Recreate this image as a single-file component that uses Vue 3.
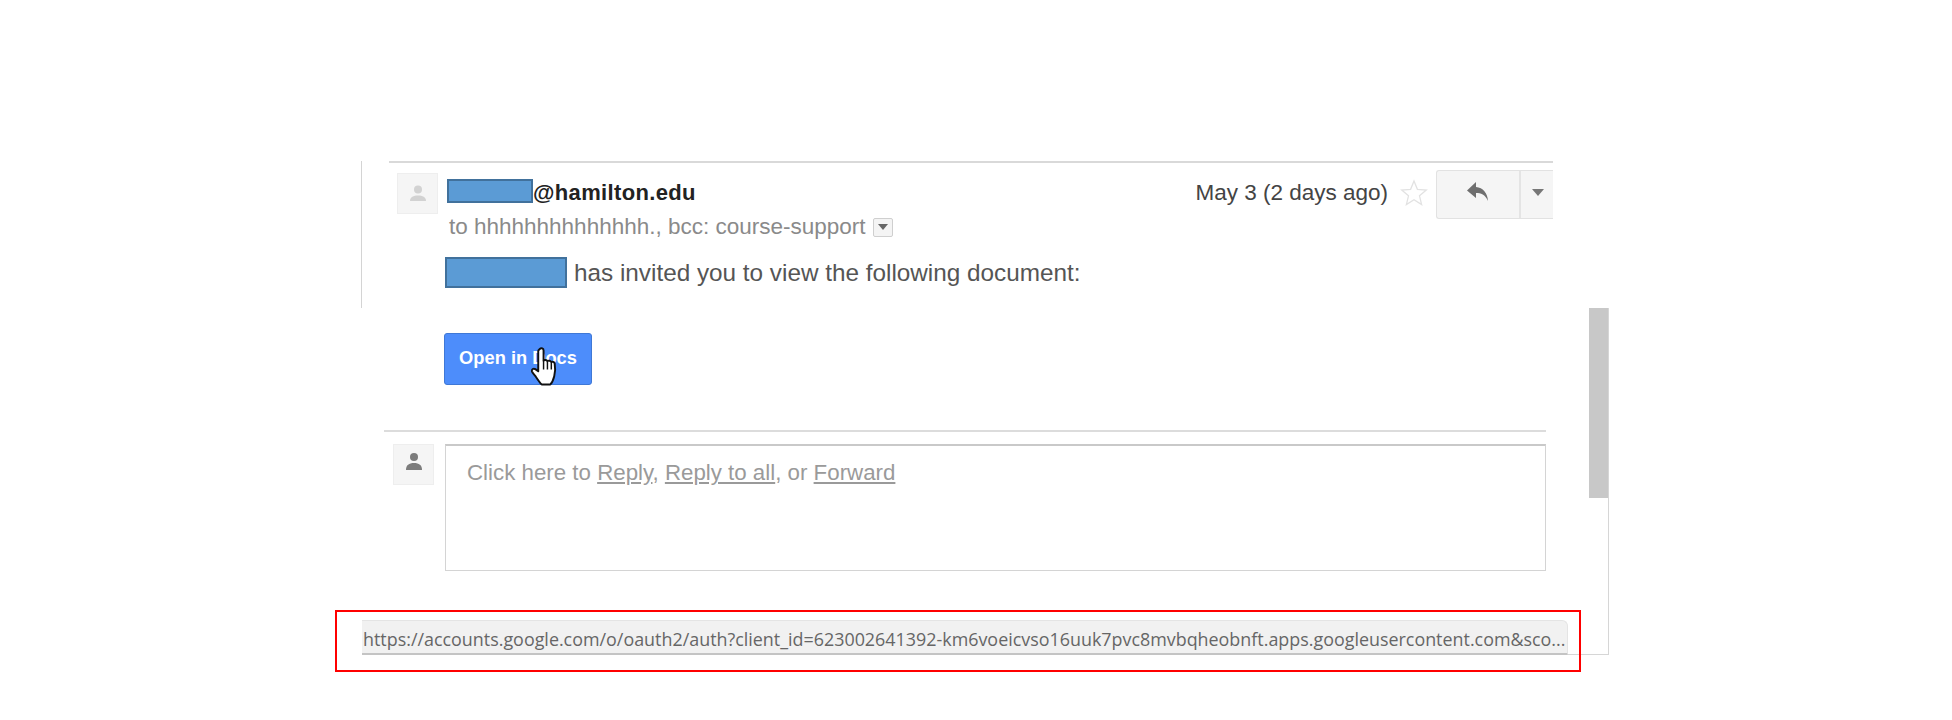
<script setup>
const url = 'https://accounts.google.com/o/oauth2/auth?client_id=623002641392-km6voeicvso16uuk7pvc8mvbqheobnft.apps.googleusercontent.com&sco...'
</script>

<template>
  <div class="page">
    <section class="thread">
      <div class="message">
        <div class="avatar small">
          <svg width="22" height="22" viewBox="0 0 22 22"><circle cx="11" cy="6.5" r="4" fill="#d2d2d2"/><path d="M3 18c0-4 3.5-5.5 8-5.5s8 1.500 8 5.500z" fill="#d2d2d2"/></svg>
        </div>
        <div class="body">
          <div class="row-top">
            <div class="sender"><span class="redact name"></span><b>@hamilton.edu</b></div>
            <div class="meta">
              <span class="date">May 3 (2 days ago)</span>
              <svg class="star" width="28" height="28" viewBox="0 0 28 28"><path d="M14 2l3.400 8.300 8.900.7-6.800 5.800 2.100 8.700L14 20.800l-7.600 4.700 2.100-8.700L1.700 11l8.900-.7z" fill="#fff" stroke="#e2e2e2" stroke-width="1.300"/></svg>
              <div class="reply-btn">
                <div class="reply-main">
                  <svg width="24" height="22" viewBox="0 0 24 22"><path d="M10 1L1 9.500 10 17v-5c5 0 9 1.500 12 8-.5-8-5-13.500-12-14z" fill="#6f6f6f"/></svg>
                </div>
                <div class="reply-more"><i class="tri"></i></div>
              </div>
            </div>
          </div>
          <div class="recipients">
            <span>to hhhhhhhhhhhhhh., bcc: course-support</span>
            <span class="caret-box"><i class="tri small-tri"></i></span>
          </div>
          <div class="invite"><span class="redact who"></span><span>has invited you to view the following document:</span></div>
        </div>
      </div>
    </section>

    <section class="lower">
      <div class="scrollbar"></div>
      <div class="open-wrap">
        <a class="open-btn">Open in Docs</a>
        <svg class="hand" width="31" height="41" viewBox="0 0 32 42"><path d="M10 3c1.800-1.600 4-.6 4 1.500V15c1-1.200 3.200-1 4 .5 1.200-1 3.200-.6 4 1 1.200-.8 3-.3 3.500 1.500.7 4 .5 9-.5 13-1 4-2.500 7-4 8.500H12c-2-2-4-5-6-8-1.500-2-3.500-4-4-5.500-.5-2 1.500-3.500 3.500-2.300l3 2.300V5c0-.8.800-1.400 1.500-2z" fill="#fff" stroke="#111" stroke-width="2" stroke-linejoin="round"/><path d="M14 15v9M18 16v8M22 17v7" stroke="#111" stroke-width="1.500" fill="none"/></svg>
      </div>
      <hr class="divider" />
      <div class="reply-row">
        <div class="avatar me">
          <svg width="20" height="22" viewBox="0 0 20 22"><circle cx="10" cy="6" r="4" fill="#7c7c7c"/><path d="M2 19c0-5 3-7 8-7s8 2 8 7z" fill="#7c7c7c"/></svg>
        </div>
        <div class="reply-box">Click here to <u>Reply</u>, <u>Reply to all</u>, or <u>Forward</u></div>
      </div>
      <div class="status-wrap">
        <div class="status">{{ url }}</div>
      </div>
    </section>
  </div>
</template>

<style>
html, body { margin: 0; background: #fff; }
</style>

<style scoped>
.page {
  width: 1952px;
  height: 720px;
  overflow: hidden;
  padding-top: 161px;
  box-sizing: border-box;
  font-family: "Liberation Sans", Arial, sans-serif;
  color: #444;
  background: #fff;
}
.thread {
  margin-left: 361px;
  width: 1192px;
  height: 147px;
  box-sizing: border-box;
  border-left: 1px solid #d4d4d4;
  padding-left: 27px;
  overflow: hidden;
}
.message {
  border-top: 2px solid #d9d9d9;
  height: 145px;
  display: flex;
  padding: 10px 0 0 8px;
  box-sizing: content-box;
}
.avatar {
  box-sizing: border-box;
  background: #f5f5f5;
  border: 1px solid #eee;
  display: flex;
  align-items: center;
  justify-content: center;
  flex: none;
}
.avatar.small { width: 41px; height: 41px; }
.avatar.me { width: 41px; height: 41px; padding-bottom: 5px; }
.body { flex: 1; margin-left: 9px; min-width: 0; }
.row-top { display: flex; justify-content: space-between; height: 42px; }
.sender { display: flex; align-items: flex-start; padding: 6px 0 0; font-size: 22px; color: #222; }
.sender b { letter-spacing: .35px; line-height: 24px; margin-top: 2px; }
.redact { display: block; box-sizing: border-box; background: #5b9bd5; border: 2px solid #41719c; }
.redact.name { width: 86px; height: 24px; }
.meta { display: flex; align-items: flex-start; }
.date { font-size: 22.5px; line-height: 24px; margin-top: 8px; color: #444; }
.star { margin: 6px 8px 0 12px; }
.reply-btn {
  display: flex;
  width: 117px;
  height: 49px;
  margin-top: -3px;
  box-sizing: border-box;
  border: 1px solid #e2e2e2;
  border-right: 0;
  border-radius: 3px 0 0 3px;
  background: #f5f5f5;
}
.reply-main { width: 84px; display: flex; align-items: center; justify-content: center; border-right: 2px solid #e4e4e4; padding-bottom: 6px; box-sizing: border-box; }
.reply-more { flex: 1; display: flex; align-items: center; justify-content: center; padding: 0 0 4px 1px; }
.tri { display: block; width: 0; height: 0; border: 6px solid transparent; border-top: 7px solid #777; border-bottom: 0; }
.recipients { display: flex; align-items: center; height: 24px; padding-left: 2px; font-size: 22.5px; color: #8a8a8a; }
.caret-box {
  margin-left: 7px;
  width: 20px;
  height: 19px;
  box-sizing: border-box;
  border: 1px solid #cfcfcf;
  border-radius: 2px;
  background: #f4f4f4;
  display: flex;
  align-items: center;
  justify-content: center;
}
.small-tri { border-width: 5px; border-top-width: 6px; border-bottom-width: 0; border-top-color: #666; }
.invite { display: flex; align-items: center; height: 31px; margin-top: 18px; margin-left: -2px; font-size: 24.3px; color: #555; }
.redact.who { width: 122px; height: 31px; margin-right: 7px; }

.lower {
  position: relative;
  margin-left: 362px;
  width: 1247px;
  height: 347px;
  box-sizing: border-box;
  border-right: 1px solid #d6d6d6;
  border-bottom: 1px solid #d6d6d6;
}
.scrollbar { position: absolute; top: 0; right: 0; width: 19px; height: 190px; background: #c8c8c8; }
.open-wrap { position: relative; padding: 25px 0 0 82px; height: 52px; }
.open-btn {
  display: flex;
  align-items: center;
  justify-content: center;
  width: 148px;
  height: 52px;
  box-sizing: border-box;
  padding-bottom: 3px;
  background: #4d8dfb;
  border: 1px solid #3f78d6;
  border-radius: 3px;
  color: #fff;
  font-weight: bold;
  font-size: 18.3px;
}
.hand { position: absolute; left: 168px; top: 38px; }
.divider { margin: 45px 0 0 22px; width: 1162px; border: 0; border-top: 2px solid #dcdcdc; height: 0; }
.reply-row { display: flex; margin: 12px 0 0 31px; }
.reply-box {
  margin-left: 11px;
  width: 1101px;
  height: 127px;
  box-sizing: border-box;
  border: 1px solid #d4d4d4;
  border-top: 2px solid #c9c9c9;
  padding: 14px 0 0 21px;
  font-size: 22.3px;
  line-height: 26px;
  color: #9a9a9a;
}
.status-wrap { position: absolute; left: 0; bottom: -1px; }
.status {
  width: 1206px;
  height: 35px;
  box-sizing: border-box;
  background: #f1f1f1;
  border-top: 1px solid #e4e4e4;
  border-right: 1px solid #e4e4e4;
  border-bottom: 2px solid #c4c4c4;
  border-radius: 0 6px 0 0;
  padding-left: 1px;
  font-family: "Open Sans", sans-serif;
  font-size: 17.9px;
  line-height: 36px;
  color: #666;
  white-space: nowrap;
  overflow: hidden;
}
.status-wrap::before {
  content: "";
  position: absolute;
  left: -27px;
  top: -10px;
  width: 1246px;
  height: 62px;
  box-sizing: border-box;
  border: 2px solid #f00;
}
</style>
